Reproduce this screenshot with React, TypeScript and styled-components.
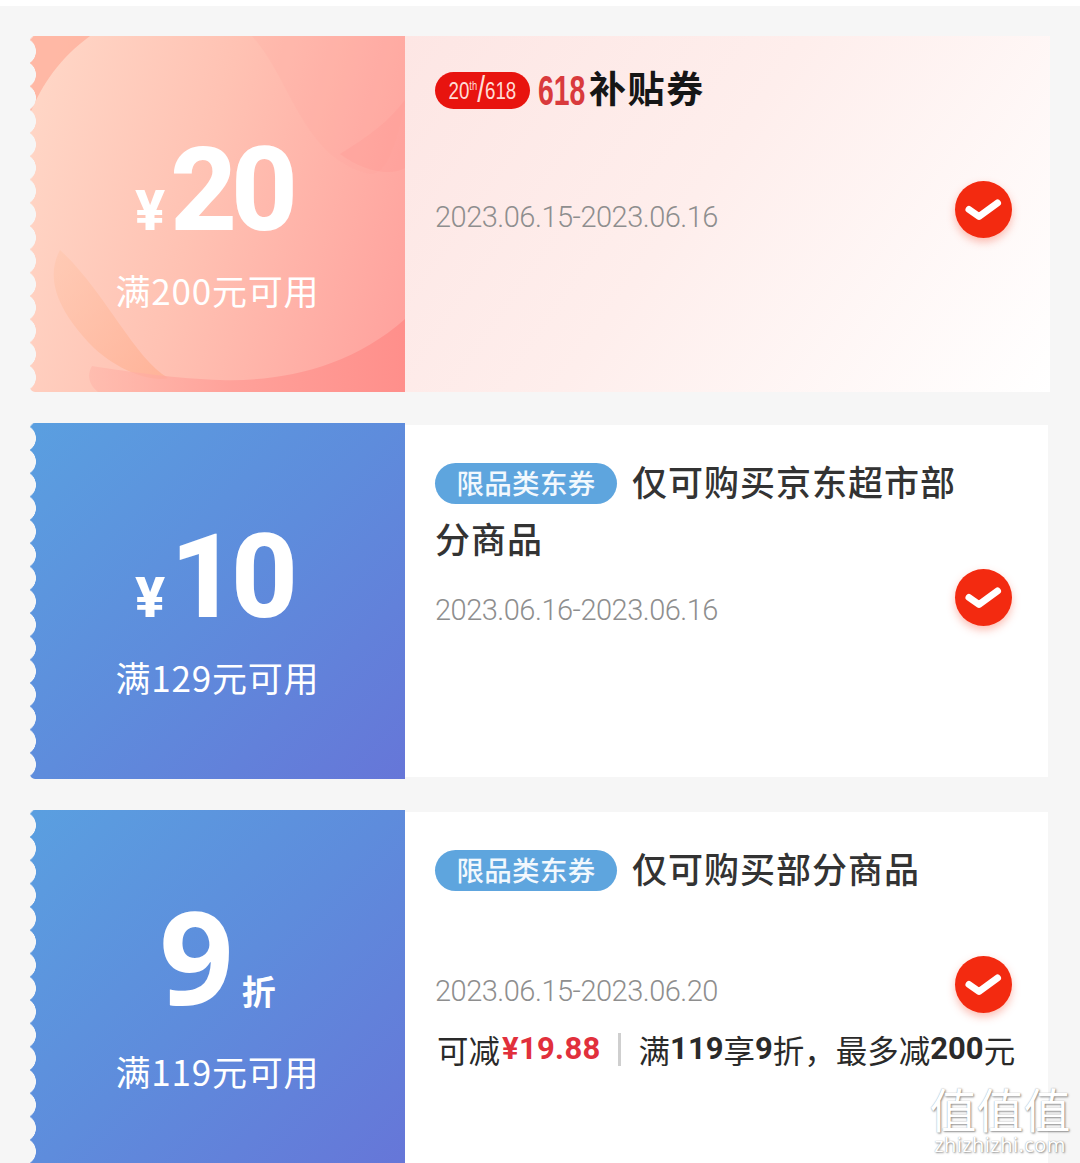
import { FC, ReactNode } from 'react';
import styled, { createGlobalStyle } from 'styled-components';

const GlobalStyle = createGlobalStyle`
  html, body {
    margin: 0;
    padding: 0;
    background: #f6f6f6;
  }
  body {
    font-family: 'Noto Sans CJK SC', 'Noto Sans', sans-serif;
  }
`;

const Page = styled.div`
  position: relative;
  width: 1080px;
  height: 1163px;
  overflow: hidden;
  background: #f6f6f6;
`;

const TopStrip = styled.div`
  height: 6px;
  background: #fff;
`;

const List = styled.div`
  display: flex;
  flex-direction: column;
  gap: 31px;
  padding: 30px 30px 0;
`;

const Card = styled.div`
  flex: none;
  display: grid;
  grid-template-columns: 375px 1fr;
  height: 356px;
`;

const Stub = styled.div<{ $tone: 'peach' | 'blue' }>`
  position: relative;
  display: flex;
  flex-direction: column;
  align-items: center;
  overflow: hidden;
  border-radius: 5px 0 0 5px;
  color: #fff;
  background: ${({ $tone }) =>
    $tone === 'peach'
      ? 'linear-gradient(105deg, #ffd8c8 0%, #ffc2b3 45%, #ffa09c 100%)'
      : 'linear-gradient(135deg, #5a9fe0 0%, #5e8cdc 50%, #6676d8 100%)'};

  &::before {
    content: '';
    position: absolute;
    z-index: 2;
    top: 0;
    bottom: 0;
    left: 0;
    width: 8px;
    background: radial-gradient(circle 14px at -8px 50%, #f6f6f6 13.6px, transparent 14.2px) 0 3.7px / 8px 23.3px repeat-y;
  }
`;

const StubArt = styled.svg`
  position: absolute;
  inset: 0;
  width: 100%;
  height: 100%;
`;

const Amount = styled.div`
  position: relative;
  display: flex;
  align-items: baseline;
  height: 115px;
  margin: 97px 8px 0 0;
  font-family: Roboto, 'Noto Sans', sans-serif;
  font-weight: 800;
  line-height: 115px;
`;

const Yen = styled.span`
  font-size: 56px;
  margin-right: 5px;
`;

const Digits = styled.span`
  font-size: 116px;
  letter-spacing: -6px;
`;

const Discount = styled.div`
  position: relative;
  display: flex;
  align-items: baseline;
  height: 132px;
  margin-top: 87px;
  line-height: 115px;
  font-family: 'Noto Sans', sans-serif;
  font-weight: 700;
`;

const DiscountNum = styled.span`
  font-size: 130px;
`;

const DiscountUnit = styled.span`
  margin-left: 8px;
  font-family: 'Noto Sans CJK SC', sans-serif;
  font-size: 34px;
  font-weight: 700;
`;

const Threshold = styled.div`
  position: relative;
  margin-top: 18px;
  font-size: 35px;
  line-height: 48px;
  letter-spacing: 0.8px;
`;

const Body = styled.div<{ $tinted?: boolean; $inset?: boolean }>`
  position: relative;
  margin: ${({ $inset }) => ($inset ? '2px 2px 2px 0' : '0')};
  padding: ${({ $inset }) => ($inset ? '27px 0 0 30px' : '36px 0 0 30px')};
  background: ${({ $tinted }) =>
    $tinted ? 'linear-gradient(125deg, #fde6e4 0%, #feeeec 45%, #ffffff 100%)' : '#fff'};
`;

const Title = styled.div`
  width: 540px;
  color: #333;
  font-size: 35px;
  font-weight: 500;
  line-height: 57px;
  letter-spacing: 1px;
`;

const Tag = styled.span`
  display: inline-block;
  width: 182px;
  height: 41px;
  margin-right: 15px;
  border-radius: 21px;
  background: #5ea5de;
  color: #f2f8fd;
  font-size: 27.5px;
  font-weight: 500;
  line-height: 38px;
  letter-spacing: 0.3px;
  text-align: center;
  vertical-align: 2px;
`;

const PromoTitle = styled.div`
  display: flex;
  align-items: center;
  height: 37px;
`;

const PromoPill = styled.div`
  display: flex;
  align-items: center;
  justify-content: center;
  width: 95px;
  height: 37px;
  border-radius: 19px;
  background: #e8140f;
  color: #ffdcd6;
  font-family: 'Liberation Sans', sans-serif;
  font-size: 24px;
`;

const PromoPillText = styled.span`
  display: inline-block;
  transform: scaleX(0.78);
  white-space: nowrap;
`;

const PromoSup = styled.sup`
  font-size: 12px;
  line-height: 0;
`;

const PromoSlash = styled.span`
  font-size: 36px;
  font-weight: 400;
  line-height: 0;
  vertical-align: -3px;
`;

const PromoNum = styled.span`
  display: inline-block;
  width: 48px;
  margin-left: 8px;
  color: #d93a3c;
  font-family: 'Liberation Sans', sans-serif;
  font-size: 43px;
  font-weight: 700;
  transform: scaleX(0.66);
  transform-origin: left center;
`;

const PromoName = styled.span`
  margin-left: 3px;
  color: #161616;
  font-size: 37px;
  font-weight: 700;
  line-height: 37px;
  letter-spacing: 1.6px;
  transform: translateY(-3px);
`;

const DateRange = styled.div<{ $top: number }>`
  margin-top: ${({ $top }) => $top}px;
  color: #8e8e8e;
  font-family: Roboto, sans-serif;
  font-size: 29px;
  font-weight: 300;
  line-height: 36px;
  letter-spacing: -0.5px;
  white-space: nowrap;
`;

const Saving = styled.div`
  display: flex;
  align-items: center;
  height: 36px;
  margin: 22px 0 0 2px;
  color: #2a2a2a;
  font-size: 31.5px;
  line-height: 36px;
  white-space: nowrap;
`;

const Price = styled.span`
  margin-left: 2px;
  color: #e1303c;
  font-family: Roboto, 'Noto Sans', sans-serif;
  font-weight: 700;
  font-size: 31px;
  letter-spacing: 0.3px;
`;

const Divider = styled.i`
  flex: none;
  width: 3px;
  height: 33px;
  margin: 0 18px 0 17px;
  background: #cfcfcf;
`;

const Strong = styled.b`
  font-family: Roboto, 'Noto Sans', sans-serif;
  font-weight: 700;
  font-size: 31px;
`;

const Check = styled.div<{ $inset?: boolean }>`
  position: absolute;
  top: ${({ $inset }) => ($inset ? '143.5px' : '144.5px')};
  right: ${({ $inset }) => ($inset ? '36px' : '38px')};
  width: 57px;
  height: 57px;
  border-radius: 50%;
  background: #f32a10;
  box-shadow: 0 4px 9px rgba(245, 70, 40, 0.35);
`;

const CheckIcon = styled.svg`
  display: block;
  width: 57px;
  height: 57px;
`;

const Watermark = styled.div`
  position: absolute;
  right: 9px;
  bottom: 6px;
  width: 142px;
  color: #fff;
  text-align: center;
  text-shadow: 1px 1px 2px rgba(90, 90, 90, 0.65), 0 0 1px rgba(120, 120, 120, 0.7);
`;

const WatermarkGlyphs = styled.div`
  font-size: 47px;
  font-weight: 400;
  line-height: 50px;
`;

const WatermarkUrl = styled.div`
  font-family: 'Noto Sans', sans-serif;
  font-size: 20px;
  line-height: 24px;
  letter-spacing: 0.4px;
`;

const PeachArt: FC = () => (
  <StubArt viewBox="0 0 375 356" preserveAspectRatio="none" aria-hidden>
    <defs>
      <linearGradient id="peachBand" x1="0" y1="0" x2="1" y2="0">
        <stop offset="0" stopColor="#ffb4a8" stopOpacity="0.55" />
        <stop offset="0.45" stopColor="#ff9f98" stopOpacity="0.9" />
        <stop offset="1" stopColor="#ff8f8b" />
      </linearGradient>
      <linearGradient id="peachLeaf" x1="0" y1="0" x2="1" y2="1">
        <stop offset="0" stopColor="#ffc4a8" stopOpacity="0.45" />
        <stop offset="1" stopColor="#ffae90" stopOpacity="0.75" />
      </linearGradient>
    </defs>
    <path d="M0 0H60C30 22 12 48 0 78Z" fill="#ffb09c" opacity="0.8" />
    <path d="M222 0C262 44 272 122 340 138C358 140 368 100 375 66V0Z" fill="#ff9f99" opacity="0.16" />
    <path d="M310 118C340 100 360 84 375 64V132C360 140 335 136 310 118Z" fill="#ff928e" opacity="0.25" />
    <path d="M30 214C18 236 20 268 64 312C92 338 126 346 138 342C104 322 74 254 30 214Z" fill="url(#peachLeaf)" />
    <path d="M375 283C320 332 250 346 190 344C150 343 100 336 62 330C56 340 60 350 68 356H375Z" fill="url(#peachBand)" />
  </StubArt>
);

const CheckBadge: FC<{ inset?: boolean }> = ({ inset }) => (
  <Check $inset={inset}>
    <CheckIcon viewBox="0 0 57 57" aria-hidden>
      <polyline points="14 28.5 24 35.5 42.5 22" fill="none" stroke="#fff" strokeWidth="7" strokeLinecap="round" strokeLinejoin="round" />
    </CheckIcon>
  </Check>
);

const Money: FC<{ value: string }> = ({ value }) => (
  <Amount>
    <Yen>¥</Yen>
    <Digits>{value}</Digits>
  </Amount>
);

const Coupon: FC<{
  tone: 'peach' | 'blue';
  top: ReactNode;
  threshold: string;
  tinted?: boolean;
  inset?: boolean;
  children: ReactNode;
}> = ({ tone, top, threshold, tinted, inset, children }) => (
  <Card>
    <Stub $tone={tone}>
      {tone === 'peach' && <PeachArt />}
      {top}
      <Threshold>{threshold}</Threshold>
    </Stub>
    <Body $tinted={tinted} $inset={inset}>
      {children}
      <CheckBadge inset={inset} />
    </Body>
  </Card>
);

const App: FC = () => (
  <>
    <GlobalStyle />
    <Page>
      <TopStrip />
      <List>
        <Coupon tone="peach" top={<Money value="20" />} threshold="满200元可用" tinted>
          <PromoTitle>
            <PromoPill>
              <PromoPillText>
                20<PromoSup>th</PromoSup>
                <PromoSlash>/</PromoSlash>618
              </PromoPillText>
            </PromoPill>
            <PromoNum>618</PromoNum>
            <PromoName>补贴券</PromoName>
          </PromoTitle>
          <DateRange $top={90}>2023.06.15-2023.06.16</DateRange>
        </Coupon>

        <Coupon tone="blue" top={<Money value="10" />} threshold="满129元可用" inset>
          <Title>
            <Tag>限品类东券</Tag>仅可购买京东超市部分商品
          </Title>
          <DateRange $top={26}>2023.06.16-2023.06.16</DateRange>
        </Coupon>

        <Coupon
          tone="blue"
          top={
            <Discount>
              <DiscountNum>9</DiscountNum>
              <DiscountUnit>折</DiscountUnit>
            </Discount>
          }
          threshold="满119元可用"
          inset
        >
          <Title>
            <Tag>限品类东券</Tag>仅可购买部分商品
          </Title>
          <DateRange $top={77}>2023.06.15-2023.06.20</DateRange>
          <Saving>
            可减<Price>¥19.88</Price>
            <Divider />
            满<Strong>119</Strong>享<Strong>9</Strong>折，最多减<Strong>200</Strong>元
          </Saving>
        </Coupon>
      </List>
      <Watermark>
        <WatermarkGlyphs>值值值</WatermarkGlyphs>
        <WatermarkUrl>zhizhizhi.com</WatermarkUrl>
      </Watermark>
    </Page>
  </>
);

export default App;
